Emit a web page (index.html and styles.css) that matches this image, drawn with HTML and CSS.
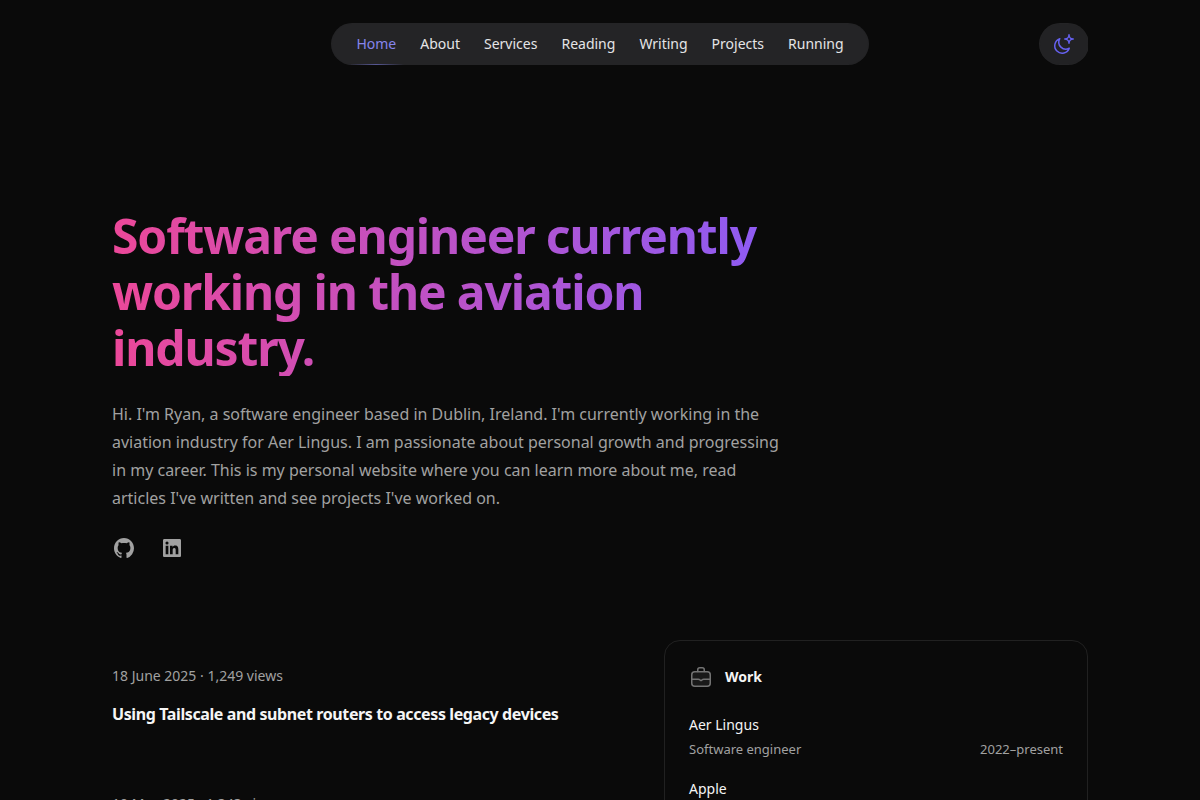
FILE: index.html
```html
<!DOCTYPE html>
<html lang="en">
<head>
    <meta charset="UTF-8">
    <meta name="viewport" content="width=device-width, initial-scale=1.0">
    <title>Ryan - Software engineer</title>
    <link rel="stylesheet" href="styles.css">
</head>
<body>

    <header class="header">
        <nav class="nav">
            <a href="#" class="active">Home</a>
            <a href="#">About</a>
            <a href="#">Services</a>
            <a href="#">Reading</a>
            <a href="#">Writing</a>
            <a href="#">Projects</a>
            <a href="#">Running</a>
        </nav>
        <button class="theme-toggle" type="button" aria-label="Toggle dark mode">
            <svg viewBox="0 0 24 24" width="24" height="24" aria-hidden="true">
                <path d="M17.25 16.22a6.937 6.937 0 0 1-9.47-9.47 7.451 7.451 0 1 0 9.47 9.47ZM12.75 7C17 7 17 2.75 17 2.75S17 7 21.25 7C17 7 17 11.25 17 11.25S17 7 12.75 7Z"/>
            </svg>
        </button>
    </header>

    <main>
        <section class="intro">
            <h1>Software engineer currently working in the aviation industry.</h1>
            <p>Hi. I'm Ryan, a software engineer based in Dublin, Ireland. I'm currently working in the aviation industry for Aer Lingus. I am passionate about personal growth and progressing in my career. This is my personal website where you can learn more about me, read articles I've written and see projects I've worked on.</p>
            <div class="social">
                <a href="#" aria-label="GitHub">
                    <svg viewBox="0 0 24 24" width="24" height="24">
                        <path fill-rule="evenodd" clip-rule="evenodd" d="M12 2C6.475 2 2 6.588 2 12.253c0 4.537 2.862 8.369 6.838 9.727.5.09.687-.218.687-.487 0-.243-.013-1.05-.013-1.91C7 20.059 6.35 18.957 6.15 18.38c-.113-.295-.6-1.205-1.025-1.448-.35-.192-.85-.667-.013-.68.788-.012 1.35.744 1.538 1.051.9 1.551 2.338 1.116 2.912.846.088-.666.35-1.115.638-1.371-2.225-.256-4.55-1.14-4.55-5.062 0-1.115.387-2.038 1.025-2.756-.1-.256-.45-1.307.1-2.717 0 0 .837-.269 2.75 1.051.8-.23 1.65-.346 2.5-.346.85 0 1.7.115 2.5.346 1.912-1.333 2.75-1.05 2.75-1.05.55 1.409.2 2.46.1 2.716.637.718 1.025 1.628 1.025 2.756 0 3.934-2.337 4.806-4.562 5.062.362.32.675.936.675 1.897 0 1.371-.013 2.473-.013 2.82 0 .268.188.589.688.486a10.039 10.039 0 0 0 4.932-3.74A10.447 10.447 0 0 0 22 12.253C22 6.588 17.525 2 12 2Z"/>
                    </svg>
                </a>
                <a href="#" aria-label="LinkedIn">
                    <svg viewBox="0 0 24 24" width="24" height="24">
                        <path d="M18.335 18.339H15.67v-4.177c0-.996-.02-2.278-1.39-2.278-1.389 0-1.601 1.084-1.601 2.205v4.25h-2.666V9.75h2.56v1.17h.035c.358-.674 1.228-1.387 2.528-1.387 2.7 0 3.2 1.778 3.2 4.091v4.715zM7.003 8.575a1.546 1.546 0 0 1-1.548-1.549 1.548 1.548 0 1 1 1.547 1.549zm1.336 9.764H5.666V9.75H8.34v8.589zM19.67 3H4.329C3.593 3 3 3.58 3 4.297v15.406C3 20.42 3.594 21 4.328 21h15.338C20.4 21 21 20.42 21 19.703V4.297C21 3.58 20.4 3 19.666 3h.003z"/>
                    </svg>
                </a>
            </div>
        </section>

        <div class="columns">
            <section class="articles">
                <article>
                    <p class="meta">18 June 2025 · 1,249 views</p>
                    <h2>Using Tailscale and subnet routers to access legacy devices</h2>
                </article>
                <article>
                    <p class="meta">10 May 2025 · 1,343 views</p>
                </article>
            </section>

            <aside class="work">
                <h2>
                    <svg viewBox="0 0 24 24" width="24" height="24" aria-hidden="true">
                        <path class="case" d="M2.75 9.75a3 3 0 0 1 3-3h12.5a3 3 0 0 1 3 3v8.5a3 3 0 0 1-3 3H5.75a3 3 0 0 1-3-3v-8.5Z"/>
                        <path d="M3 14.25h6.249c.484 0 .952-.002 1.316.319l.777.682a.996.996 0 0 0 1.316 0l.777-.682c.364-.32.832-.319 1.316-.319H21M8.75 6.5V4.75a2 2 0 0 1 2-2h2.5a2 2 0 0 1 2 2V6.5"/>
                    </svg>
                    Work
                </h2>
                <ol>
                    <li>
                        <strong>Aer Lingus</strong>
                        <div class="role"><span>Software engineer</span><span>2022–present</span></div>
                    </li>
                    <li>
                        <strong>Apple</strong>
                    </li>
                </ol>
            </aside>
        </div>
    </main>

</body>
</html>
```
FILE: styles.css
```css
* {
    box-sizing: border-box;
}

body {
    width: 976px;
    height: 800px;
    margin: 0 auto;
    overflow: hidden;
    background: #0a0a0a;
    color: #f5f5f5;
    font-family: "Noto Sans", sans-serif;
    font-size: 16px;
}

h1, h2, p, ol {
    margin: 0;
    padding: 0;
}

a {
    color: inherit;
    text-decoration: none;
}

.header {
    display: grid;
    grid-template-columns: 1fr auto 1fr;
    align-items: center;
    height: 88px;
}

.nav {
    grid-column: 2;
    display: flex;
    padding: 0 12px;
    border-radius: 20px;
    background: #242426;
    box-shadow: 0 0 0 1px #242426;
    color: #e4e4e7;
    font-size: 14px;
    line-height: 24px;
}
.nav a {
    position: relative;
    padding: 8px 12px;
}
.nav .active {
    color: #8684ec;
}
.nav .active::after {
    content: "";
    position: absolute;
    left: 4px;
    right: 4px;
    bottom: -1px;
    height: 1px;
    background: linear-gradient(to right, transparent, rgba(129, 130, 240, 0.55), transparent);
}

.theme-toggle {
    justify-self: end;
    display: flex;
    padding: 8px 12px;
    border: 0;
    border-radius: 20px;
    background: #222224;
    box-shadow: 0 0 0 1px #242426;
}
.theme-toggle svg {
    fill: none;
    stroke: #6560ee;
    stroke-width: 1.5;
    stroke-linecap: round;
    stroke-linejoin: round;
}

.intro {
    width: 672px;
    padding-top: 120px;
}
.intro h1 {
    background: linear-gradient(to right, #ec4899, #8b5cf6);
    -webkit-background-clip: text;
    background-clip: text;
    color: transparent;
    font-size: 48px;
    line-height: 56px;
    letter-spacing: -0.0237em;
}
.intro p {
    margin-top: 24px;
    color: #a1a1a1;
    line-height: 28px;
}

.social {
    display: flex;
    gap: 24px;
    margin-top: 24px;
}
.social svg {
    display: block;
    fill: #a1a1a1;
}

.columns {
    display: grid;
    grid-template-columns: 1fr 424px;
    gap: 80px;
    margin-top: 80px;
}

.articles {
    display: flex;
    flex-direction: column;
    gap: 64px;
    padding-top: 24px;
}
.articles .meta {
    margin-bottom: 12px;
    color: #a1a1a1;
    font-size: 14px;
    line-height: 24px;
}
.articles h2 {
    font-size: 16px;
    line-height: 28px;
    letter-spacing: -0.0245em;
}

.work {
    height: 400px;
    padding: 24px;
    border: 1px solid #212121;
    border-radius: 16px;
}
.work h2 {
    display: flex;
    gap: 12px;
    font-size: 14px;
    line-height: 24px;
}
.work svg {
    fill: none;
    stroke: #737373;
    stroke-width: 1.5;
    stroke-linecap: round;
    stroke-linejoin: round;
}
.work .case {
    fill: rgba(115, 115, 115, 0.15);
}
.work ol {
    display: flex;
    flex-direction: column;
    gap: 16px;
    margin-top: 24px;
    list-style: none;
}
.work strong {
    display: block;
    font-size: 14px;
    font-weight: 400;
    line-height: 24px;
}
.role {
    display: flex;
    justify-content: space-between;
    color: #a1a1a1;
    font-size: 13px;
    line-height: 24px;
}
```
